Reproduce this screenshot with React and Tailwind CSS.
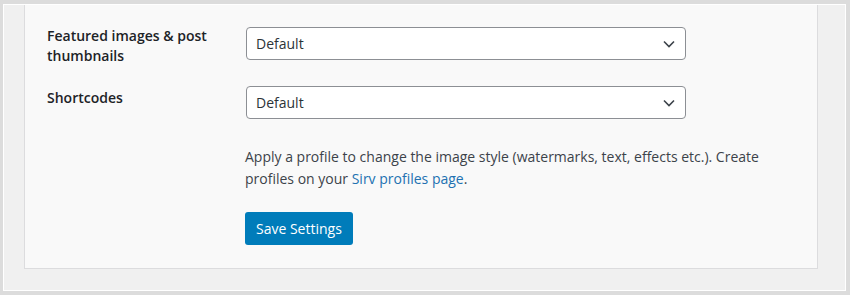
import React from 'react';

const Chevron = () => (
  <svg width="12" height="8" viewBox="0 0 12 8" className="absolute right-[10px] top-1/2 -translate-y-1/2 pointer-events-none">
    <path d="M1 1.5 L6 6.5 L11 1.5" fill="none" stroke="#3c434a" strokeWidth="1.6" />
  </svg>
);

const SelectBox = ({ value }) => (
  <div className="relative w-[440px] h-[33px] bg-white border border-[#8c8f94] rounded-[4px] flex items-center pl-[9px] text-[14px] text-[#2c3338]">
    {value}
    <Chevron />
  </div>
);

const SettingRow = ({ label, value, labelOffset }) => (
  <div className="flex items-start">
    <div className={`w-[199px] pr-[10px] font-semibold text-[14px] leading-[20px] text-[#1d2327] ${labelOffset}`}>
      {label}
    </div>
    <SelectBox value={value} />
  </div>
);

export default function App() {
  return (
    <div
      className="w-[850px] h-[295px] bg-[#dcdcdc] pt-[4px] pl-[3px] pr-[4px] pb-[4px]"
      style={{ fontFamily: '"Open Sans", "Noto Sans", sans-serif' }}
    >
      <div className="h-full border border-white bg-[#f0f0f0] pl-[20px] pr-[27px] pb-[21px] flex flex-col">
        <div className="flex-1 bg-[#f9f9f9] border-l border-r border-b border-[#dcdcde] pl-[22px] pt-[22px] flex flex-col">
          <SettingRow label="Featured images & post thumbnails" value="Default" labelOffset="-mt-[1px]" />
          <div className="h-[20px]" />
          <SettingRow label="Shortcodes" value="Default" labelOffset="mt-[2px]" />
          <div className="ml-[198px] mt-[27px] text-[14px] leading-[22px] text-[#3c434a]">
            Apply a profile to change the image style (watermarks, text, effects etc.). Create
            <br />
            profiles on your <a href="#" className="text-[#2271b1]">Sirv profiles page</a>.
          </div>
          <div className="ml-[198px] mt-[22px]">
            <button className="h-[33px] px-[11px] bg-[#007cba] text-white text-[14px] rounded-[3px] leading-none">
              Save Settings
            </button>
          </div>
        </div>
      </div>
    </div>
  );
}
